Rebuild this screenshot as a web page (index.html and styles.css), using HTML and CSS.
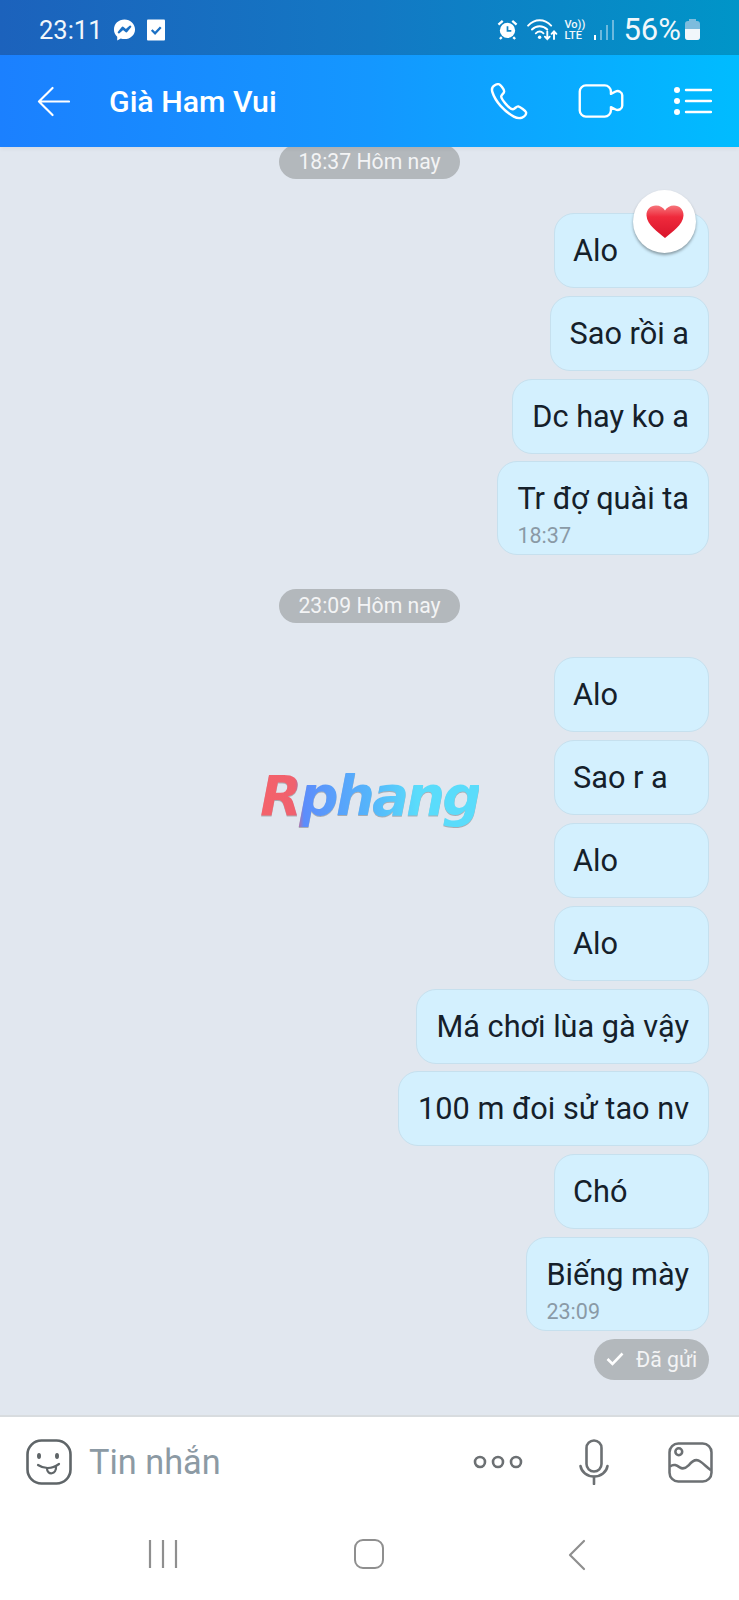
FILE: index.html
```html
<!DOCTYPE html>
<html lang="vi">
<head>
  <meta charset="UTF-8" />
  <meta name="viewport" content="width=device-width, initial-scale=1.0"/>
  <title>Già Ham Vui</title>
  <link rel="stylesheet" href="styles.css">
</head>
<body>
  <div class="phone">

    <div class="status-bar">
      <div class="status-left">
        <span class="clock">23:11</span>
        <svg class="ico-mess" viewBox="0 0 24 24"><path fill="#fff" d="M12 1C5.800 1 1 5.500 1 11.400c0 3.100 1.300 5.700 3.400 7.600v4l3.700-2.100c1.200.4 2.500.6 3.900.6 6.200 0 11-4.500 11-10.100S18.200 1 12 1z"/><path fill="none" stroke="#1b70c4" stroke-width="2.200" stroke-linejoin="round" d="M6 14.500l4-5 3.500 2.800L18 8.500l-4 5-3.500-2.800z"/></svg>
        <svg class="ico-check" viewBox="0 0 19 22"><path fill="#fff" d="M1 0h17a1 1 0 0 1 1 1v20a1 1 0 0 1-1 1H1a1 1 0 0 1-1-1V1a1 1 0 0 1 1-1z"/><path fill="none" stroke="#1b70c4" stroke-width="2.400" d="M5 11l3.500 3.500L14.500 8"/></svg>
      </div>
      <div class="status-right">
        <svg class="ico-alarm" viewBox="0 0 22 22"><circle cx="11" cy="12" r="8" fill="#fff"/><path fill="none" stroke="#1185c4" stroke-width="1.800" d="M11 7.500V12.500h4"/><path fill="none" stroke="#fff" stroke-width="2.400" d="M1.500 6L6 2M20.500 6L16 2M5 19l-2 2M17 19l2 2"/></svg>
        <svg class="ico-wifi" viewBox="0 0 32 24"><g fill="none" stroke="#fff" stroke-width="2" stroke-linecap="round"><path d="M1 8c7-7.500 17-7.500 24 0"/><path d="M5 12c4.500-4.500 11.500-4.500 16 0"/><path d="M9 16c2.500-2.300 5.500-2.300 8 0"/><path d="M21 14v8M18.500 19.500l2.500 2.500 2.500-2.500M28 22v-8M25.500 16.500l2.500-2.500 2.500 2.500"/></g><circle cx="13" cy="20" r="1.800" fill="#fff"/></svg>
        <span class="volte"><span>Vo))</span><span>LTE</span></span>
        <span class="signal"><i class="bar-1"></i><i class="bar-2"></i><i class="bar-3"></i><i class="bar-4"></i></span>
        <span class="battery-text">56%</span>
        <span class="battery"><span class="battery-fill"></span></span>
      </div>
    </div>

    <header class="app-bar">
      <svg class="ico-back" viewBox="0 0 34 32"><path fill="none" stroke="#fff" stroke-width="2.200" stroke-linecap="round" stroke-linejoin="round" d="M33 16H2M16 2L2 16l14 14"/></svg>
      <h1 class="title">Già Ham Vui</h1>
      <div class="app-actions">
        <svg class="ico-phone" viewBox="0 0 38 38"><path fill="none" stroke="#fff" stroke-width="2.500" stroke-linejoin="round" d="M4 2.500c-2.500 1.500-3 4-2 7 3 9.500 12 19.500 22 25 3 1.700 6 2 8.500 1 2.500-1 4.500-3.500 4-5.500-.3-1.300-6-5.500-8-6-1.800-.4-3.500 2.800-5.500 3-3 .2-11.500-9.500-12-13-.3-2 3.200-3.300 3-5.500C14 6.500 10 1.500 8.500 1.200 7 1 5.300 1.700 4 2.500z"/></svg>
        <svg class="ico-video" viewBox="0 0 48 36"><path fill="none" stroke="#fff" stroke-width="2.500" stroke-linejoin="round" d="M8 1.500h20c3.500 0 6.500 3 6.500 6.500v2.500l5-2.500c3-1.500 7 .5 7 4v11c0 3.500-4 5.500-7 4l-5-2.500V28c0 3.500-3 6.500-6.500 6.500H8c-3.500 0-6.500-3-6.500-6.500V8C1.500 4.500 4.500 1.500 8 1.500z"/></svg>
        <svg class="ico-list" viewBox="0 0 38 28"><g fill="#fff"><circle cx="3" cy="3" r="3"/><circle cx="3" cy="14" r="3"/><circle cx="3" cy="25" r="3"/></g><path stroke="#fff" stroke-width="2.400" stroke-linecap="round" d="M12 3h25M12 14h25M12 25h25"/></svg>
      </div>
    </header>

    <main class="chat">
      <div class="stamp stamp-first">18:37 Hôm nay</div>

      <div class="group">
        <div class="bubble wide-min">Alo
          <span class="heart-badge">
            <svg viewBox="0 0 38 34"><defs><linearGradient id="heartFill" x1="0" y1="0" x2="0" y2="1"><stop offset="0" stop-color="#f6767c"/><stop offset="0.35" stop-color="#ef2a3c"/><stop offset="1" stop-color="#d9142b"/></linearGradient></defs><path fill="url(#heartFill)" d="M19 33C12 27 1 20 .5 10.500.2 4.500 4.500.5 10 .5c4 0 7.500 2 9 5 1.500-3 5-5 9-5 5.500 0 9.800 4 9.500 10C37 20 26 27 19 33z"/></svg>
          </span>
        </div>
        <div class="bubble">Sao rồi a</div>
        <div class="bubble">Dc hay ko a</div>
        <div class="bubble">Tr đợ quài ta<span class="time">18:37</span></div>
      </div>

      <div class="stamp stamp-mid">23:09 Hôm nay</div>

      <div class="group">
        <div class="bubble wide-min">Alo</div>
        <div class="bubble wide-min">Sao r a</div>
        <div class="bubble wide-min">Alo</div>
        <div class="bubble wide-min">Alo</div>
        <div class="bubble">Má chơi lùa gà vậy</div>
        <div class="bubble">100 m đoi sử tao nv</div>
        <div class="bubble wide-min">Chó</div>
        <div class="bubble">Biếng mày<span class="time">23:09</span></div>
      </div>

      <div class="sent">
        <svg viewBox="0 0 18 14"><path fill="none" stroke="#fff" stroke-width="2.600" d="M1.500 7l5 5L16.500 1.500"/></svg>
        <span>Đã gửi</span>
      </div>

      <div class="watermark">Rphang</div>
    </main>

    <div class="composer">
      <svg class="ico-sticker" viewBox="0 0 46 46"><rect x="1.500" y="1.500" width="43" height="43" rx="14" fill="none" stroke="#5f6568" stroke-width="2.600"/><ellipse cx="13" cy="17" rx="2" ry="3" fill="#5f6568"/><ellipse cx="31" cy="17" rx="2" ry="3" fill="#5f6568"/><path fill="none" stroke="#5f6568" stroke-width="2.200" stroke-linecap="round" d="M12 26c6 4 14 4 21-1M21 29.500c0 7 10 6.500 9-2.500"/></svg>
      <span class="placeholder">Tin nhắn</span>
      <div class="composer-actions">
        <svg class="ico-more" viewBox="0 0 50 16"><g fill="none" stroke="#6c7073" stroke-width="2.600"><circle cx="7" cy="8" r="5"/><circle cx="25" cy="8" r="5"/><circle cx="43" cy="8" r="5"/></g></svg>
        <svg class="ico-mic" viewBox="0 0 30 46"><g fill="none" stroke="#6c7073" stroke-width="2.600" stroke-linecap="round"><rect x="7.500" y="1.500" width="15" height="31" rx="7.500"/><path d="M1.500 27c1 6 6.500 10.500 13.500 10.500S27.500 33 28.500 27"/><path d="M15 38v7"/></g></svg>
        <svg class="ico-gallery" viewBox="0 0 46 42"><g fill="none" stroke="#6c7073" stroke-width="2.600"><rect x="1.500" y="1.500" width="43" height="39" rx="9"/><circle cx="11" cy="10" r="3.500"/><path d="M2 25c4-3 7-1 10 1 3 2 6 1 9-2 4-5 8-7 12-4 3 2 6 5 11 9"/></g></svg>
      </div>
    </div>

    <nav class="nav-bar">
      <svg class="ico-recents" viewBox="0 0 30 30"><path stroke="#8f8f8f" stroke-width="2.200" d="M2 1v28M15 1v28M28 1v28"/></svg>
      <span class="ico-home"></span>
      <svg class="ico-navback" viewBox="0 0 18 32"><path fill="none" stroke="#8f8f8f" stroke-width="2.200" stroke-linecap="round" stroke-linejoin="round" d="M16 2L2 16l14 14"/></svg>
    </nav>

  </div>
</body>
</html>
```

FILE: styles.css
```css
* {
  box-sizing: border-box;
}

html, body {
  margin: 0;
  padding: 0;
}

body {
  font-family: 'Roboto', 'Noto Sans', sans-serif;
  background: #fff;
}

.phone {
  width: 739px;
  height: 1600px;
  display: flex;
  flex-direction: column;
  overflow: hidden;
}

/* status bar */
.status-bar {
  height: 55px;
  flex: none;
  padding: 4px 39px 0 39px;
  display: flex;
  align-items: center;
  justify-content: space-between;
  background: linear-gradient(90deg, #1c62bc 0%, #1378c4 50%, #0095c8 100%);
  color: #f1f7fb;
}

.status-left, .status-right {
  display: flex;
  align-items: center;
}

.clock {
  font-size: 25.5px;
  margin-right: 10px;
}

.ico-mess {
  width: 23px;
  height: 24px;
  margin-right: 11px;
}

.ico-check {
  width: 18px;
  height: 22px;
}

.ico-alarm {
  width: 21px;
  height: 21px;
  margin-right: 9px;
}

.ico-wifi {
  width: 31px;
  height: 23px;
  margin-right: 6px;
}

.volte {
  display: flex;
  flex-direction: column;
  font-size: 11px;
  line-height: 11px;
  font-weight: 500;
  margin-right: 9px;
  width: 21px;
}

.signal {
  display: flex;
  align-items: flex-end;
  gap: 4px;
  height: 21px;
  margin-right: 9px;
}

.signal i {
  display: block;
  width: 2px;
  background: #6cb9de;
}

.signal .bar-1 {
  height: 5px;
  background: #fff;
}

.signal .bar-2 {
  height: 10px;
}

.signal .bar-3 {
  height: 15px;
}

.signal .bar-4 {
  height: 20px;
}

.battery-text {
  font-size: 31px;
  margin-right: 4px;
}

.battery {
  width: 15px;
  height: 19px;
  margin-top: 2px;
  border-radius: 3px;
  background: #7dbcdd;
  position: relative;
  display: block;
}

.battery::before {
  content: "";
  position: absolute;
  top: -2px;
  left: 4px;
  width: 7px;
  height: 3px;
  background: #7dbcdd;
}

.battery-fill {
  position: absolute;
  left: 0;
  right: 0;
  bottom: 0;
  height: 11px;
  border-radius: 0 0 3px 3px;
  background: #f1f7fb;
}

/* header */
.app-bar {
  height: 92px;
  flex: none;
  position: relative;
  z-index: 2;
  display: flex;
  align-items: center;
  padding: 0 27px 0 37px;
  background: linear-gradient(90deg, #1b80ff 0%, #1497ff 50%, #00bcff 100%);
  box-shadow: 0 2px 4px rgba(0, 0, 0, 0.05);
}

.ico-back {
  width: 33px;
  height: 31px;
}

.title {
  margin: 0 0 0 39px;
  font-size: 30.3px;
  font-weight: 500;
  color: #fff;
}

.app-actions {
  margin-left: auto;
  display: flex;
  align-items: center;
}

.ico-phone {
  width: 38px;
  height: 37px;
  margin-right: 50px;
}

.ico-video {
  width: 46px;
  height: 34px;
  margin-right: 50px;
}

.ico-list {
  width: 38px;
  height: 28px;
}

/* chat */
.chat {
  height: 1268px;
  flex: none;
  position: relative;
  display: flex;
  flex-direction: column;
  align-items: flex-end;
  padding: 0 30px 0 0;
  background: #e1e7ef;
}

.stamp {
  align-self: center;
  margin-right: -30px;
  height: 34px;
  width: 181px;
  border-radius: 17px;
  background: #b3b8bc;
  color: #f3f4f5;
  font-size: 21.2px;
  line-height: 34px;
  text-align: center;
}

.stamp-first {
  margin-top: -2px;
  margin-bottom: 34px;
}

.stamp-mid {
  margin-top: 34px;
  margin-bottom: 34px;
}

.group {
  display: flex;
  flex-direction: column;
  align-items: flex-end;
  gap: 7.8px;
}

.bubble {
  position: relative;
  min-height: 75px;
  padding: 18px 19px;
  border: 1px solid #c6e0ee;
  border-radius: 20px;
  background: #d3f0fe;
  color: #15202a;
  font-size: 30.7px;
  line-height: 37px;
}

.wide-min {
  width: 155px;
  padding-left: 18px;
}

.time {
  display: block;
  margin-top: 6px;
  margin-bottom: -13px;
  color: #8a9aa6;
  font-size: 21.5px;
  line-height: 26px;
}

.heart-badge {
  position: absolute;
  top: -24px;
  right: 12px;
  width: 63px;
  height: 63px;
  border-radius: 50%;
  background: #fff;
  box-shadow: 0 2px 3px rgba(0, 0, 0, 0.35);
  display: flex;
  align-items: center;
  justify-content: center;
}

.heart-badge svg {
  width: 38px;
  height: 34px;
}

.sent {
  margin-top: 8px;
  width: 115px;
  height: 41px;
  border-radius: 21px;
  background: #b3b8bc;
  color: #f3f4f5;
  font-size: 21.2px;
  display: flex;
  align-items: center;
  padding-left: 12px;
  gap: 12px;
}

.sent svg {
  width: 18px;
  height: 14px;
}

.watermark {
  position: absolute;
  left: 260px;
  top: 614px;
  font-family: 'DejaVu Sans', sans-serif;
  font-size: 55px;
  font-weight: 700;
  font-style: italic;
  line-height: 70px;
  letter-spacing: -3px;
  background: linear-gradient(90deg, #f4626a 0%, #f0616e 16%, #5c8dfb 20%, #55b5fb 50%, #5adcfb 72%, #5adcfb 100%);
  -webkit-background-clip: text;
  background-clip: text;
  color: transparent;
  filter: drop-shadow(0 1px 0 rgba(0, 0, 0, 0.25));
}

/* input row */
.composer {
  height: 92px;
  flex: none;
  display: flex;
  align-items: center;
  padding: 0 26px 0 26px;
  background: #fff;
  border-top: 2px solid #d8dcdf;
}

.ico-sticker {
  width: 46px;
  height: 46px;
  margin-right: 17px;
}

.placeholder {
  font-size: 34.3px;
  color: #8c9aa4;
}

.composer-actions {
  margin-left: auto;
  display: flex;
  align-items: center;
}

.ico-more {
  width: 50px;
  height: 16px;
  margin-right: 56px;
}

.ico-mic {
  width: 30px;
  height: 46px;
  margin-right: 59px;
}

.ico-gallery {
  width: 45px;
  height: 41px;
}

/* android nav */
.nav-bar {
  flex: 1;
  display: flex;
  align-items: flex-start;
  padding-top: 32px;
  background: #fff;
}

.ico-recents {
  width: 30px;
  height: 30px;
  margin-left: 148px;
}

.ico-home {
  width: 30px;
  height: 30px;
  margin-left: 176px;
  border: 2.500px solid #8f8f8f;
  border-radius: 9px;
}

.ico-navback {
  width: 18px;
  height: 32px;
  margin-left: 184px;
}
```
